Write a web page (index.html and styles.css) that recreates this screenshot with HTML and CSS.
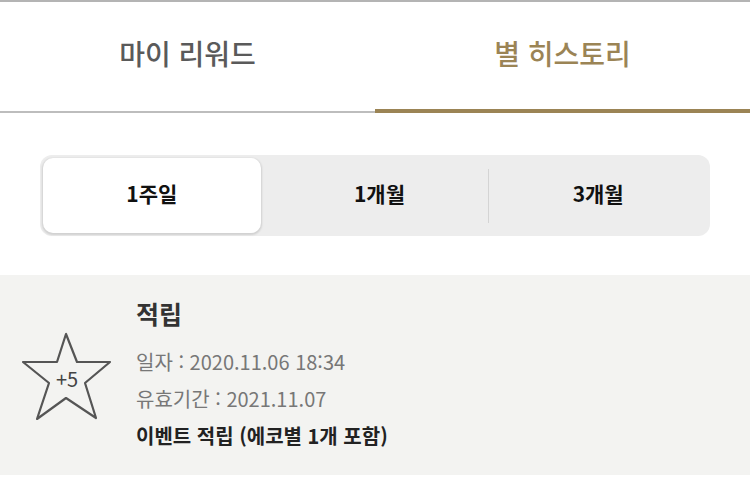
FILE: index.html
```html
<!DOCTYPE html>
<html lang="ko">
<head>
<meta charset="utf-8">
<link rel="stylesheet" href="styles.css">
</head>
<body>
<div class="page">
  <nav class="tabs">
    <div class="tab">마이 리워드</div>
    <div class="tab active">별 히스토리</div>
  </nav>
  <div class="seg-wrap">
    <div class="seg">
      <div class="seg-item selected">1주일</div>
      <div class="seg-item">1개월</div>
      <div class="seg-divider"></div>
      <div class="seg-item">3개월</div>
    </div>
  </div>
  <div class="item">
    <div class="star">
      <svg width="92" height="90" viewBox="0 0 92 90">
        <polygon points="45,3 36,31 2,31 28,52 16,88 45,67 75,87 64,52 89,31 56,31" fill="none" stroke="#555" stroke-width="2.2" stroke-linejoin="round"/>
      </svg>
      <span class="star-label">+5</span>
    </div>
    <div class="info">
      <div class="title">적립</div>
      <div class="line">일자 : 2020.11.06 18:34</div>
      <div class="line">유효기간 : 2021.11.07</div>
      <div class="line strong">이벤트 적립 (에코별 1개 포함)</div>
    </div>
  </div>
</div>
</body>
</html>
```
FILE: styles.css
```css
* { box-sizing: border-box; }
html, body { margin: 0; padding: 0; background: #fff; }
body {
  font-family: "Noto Sans CJK KR", "Noto Sans", sans-serif;
  width: 750px;
  height: 479px;
  overflow: hidden;
}
.page { border-top: 2px solid #b4b4b4; }
.tabs {
  display: flex;
  height: 111px;
}
.tab {
  flex: 1;
  display: flex;
  align-items: center;
  justify-content: center;
  font-size: 28px;
  font-weight: 500;
  color: #5a5a5a;
  border-bottom: 2px solid #bdbdbd;
  padding-bottom: 8px;
}
.tab.active {
  color: #9b8455;
  border-bottom: 4px solid #9b8455;
  padding-bottom: 6px;
}
.seg-wrap { padding: 42px 40px 39px; }
.seg {
  display: flex;
  align-items: center;
  height: 81px;
  background: #ededed;
  border-radius: 12px;
  padding: 3px;
}
.seg-item {
  flex: 1 1 0;
  height: 100%;
  display: flex;
  align-items: center;
  justify-content: center;
  font-size: 21px;
  font-weight: 700;
  color: #111;
  padding-bottom: 5px;
}
.seg-item.selected {
  background: #fff;
  border-radius: 10px;
  margin-right: 10px;
  box-shadow: 0 1px 2px 1px rgba(0,0,0,0.12);
}
.seg-divider {
  width: 1px;
  height: 54px;
  background: #d4d4d4;
}
.item {
  display: flex;
  align-items: center;
  background: #f3f3f1;
  height: 200px;
  padding-left: 21px;
}
.star {
  position: relative;
  width: 92px;
  height: 90px;
  margin-top: 1px;
}
.star svg { display: block; }
.star-label {
  position: absolute;
  left: 0;
  right: 0;
  top: 36px;
  line-height: 24px;
  text-align: center;
  font-size: 20px;
  color: #444;
}
.info {
  margin-left: 23px;
  display: flex;
  flex-direction: column;
}
.title {
  font-size: 25px;
  font-weight: 700;
  color: #333;
  line-height: 32px;
  margin-bottom: 14px;
}
.line {
  font-size: 20px;
  color: #777;
  line-height: 37px;
}
.line.strong {
  color: #222;
  font-weight: 700;
  font-size: 20px;
}
```
